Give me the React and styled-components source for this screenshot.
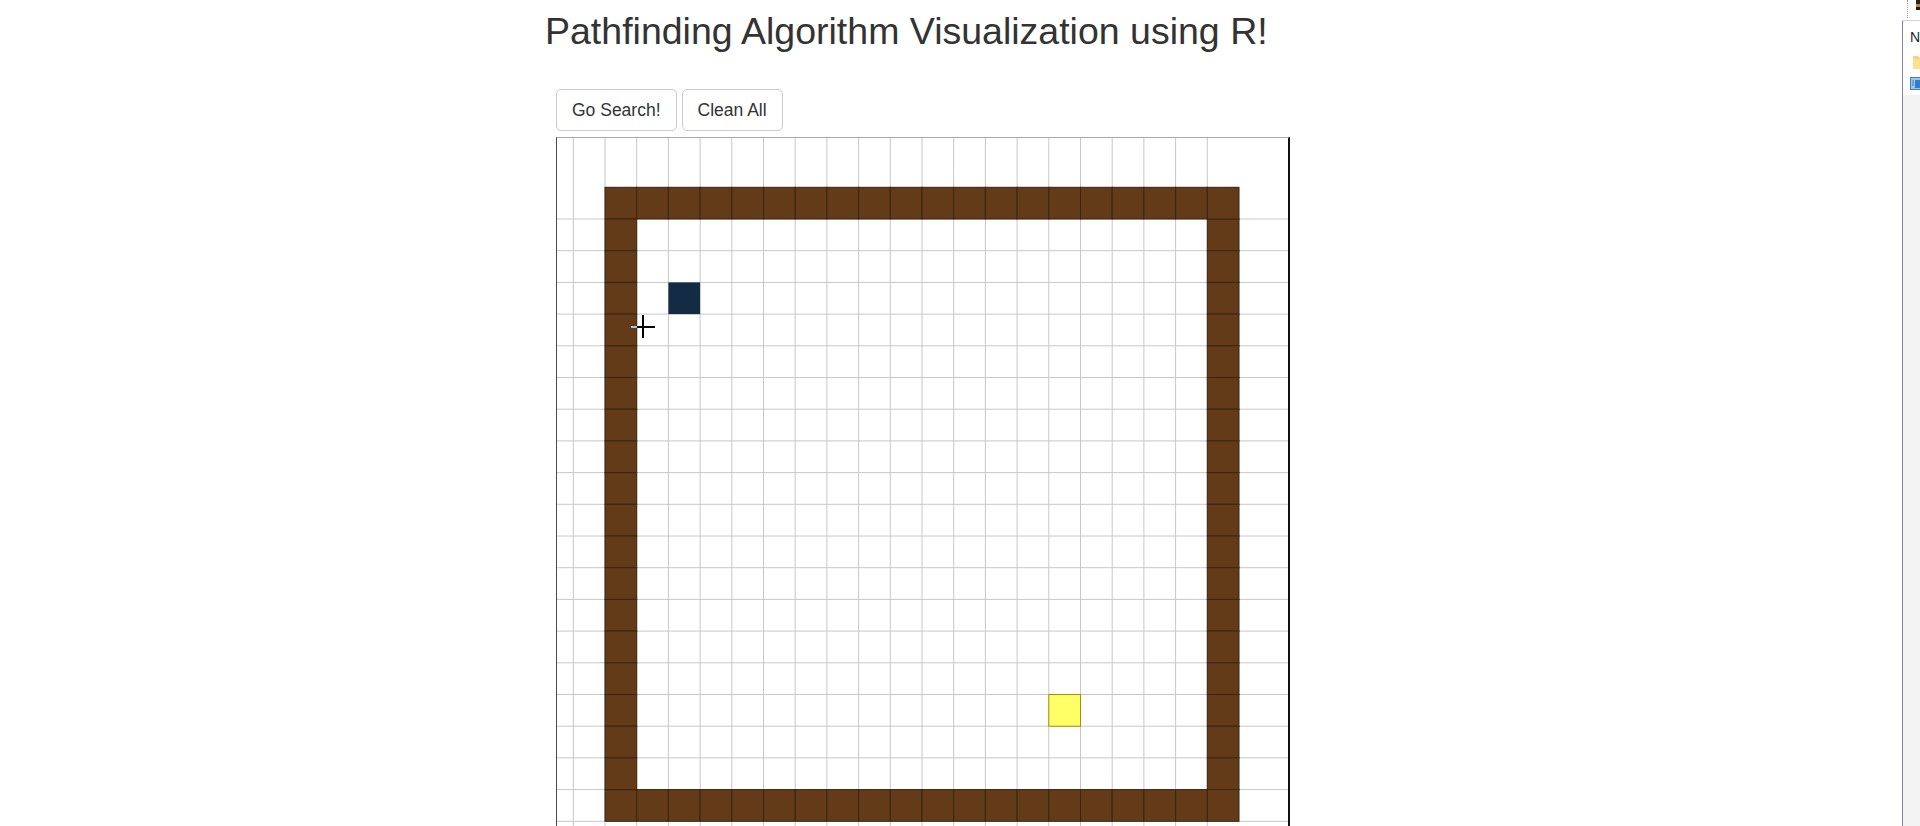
import React from 'react';
import styled, { createGlobalStyle } from 'styled-components';

// maze geometry inside the board (px)
const CELL = 31.7;
const MAZE_X = 48;
const MAZE_Y = 49.3;
const SIZE = 20;
const BOARD_W = 731;
const BOARD_H = 700;

const start = { col: 2, row: 3 };
const goal = { col: 14, row: 16 };

const walls = [];
for (let i = 0; i < SIZE; i++) {
  walls.push([i, 0], [i, SIZE - 1]);
  if (i > 0 && i < SIZE - 1) walls.push([0, i], [SIZE - 1, i]);
}

const GlobalStyle = createGlobalStyle`
  html, body {
    margin: 0;
    padding: 0;
    overflow: hidden;
    background: #fff;
  }
  body {
    font-family: "Liberation Sans", Arial, sans-serif;
    color: #333;
  }
`;

const Screen = styled.div`
  display: flex;
  width: 1920px;
  height: 826px;
  overflow: hidden;
`;

const Main = styled.main`
  flex: 1;
  padding-left: 545px;
`;

const Title = styled.h2`
  margin: 11px 0 0;
  font-size: 37.5px;
  font-weight: 400;
  line-height: 1.1;
  color: #333;
`;

const Toolbar = styled.div`
  display: flex;
  gap: 5px;
  margin: 37px 0 0 11px;
`;

const Button = styled.button`
  height: 42px;
  padding: 0 15px;
  border: 1px solid #ccc;
  border-radius: 5px;
  background: #fff;
  color: #333;
  font-family: "Liberation Sans", Arial, sans-serif;
  font-size: 17.5px;
  line-height: 25px;
`;

const Board = styled.div`
  position: relative;
  width: ${BOARD_W}px;
  height: ${BOARD_H}px;
  margin: 6px 0 0 11px;
  border-left: 1px solid #4a4a4a;
  border-top: 1px solid #a8a8a8;
  border-right: 2px solid #111;
`;

const Cursor = styled.svg`
  position: absolute;
  left: ${(p) => p.$x - 12}px;
  top: ${(p) => p.$y - 12}px;
  pointer-events: none;
`;

const SideWindow = styled.aside`
  width: 18px;
  display: flex;
  flex-direction: column;
  overflow: hidden;
`;

const SideTop = styled.div`
  position: relative;
  height: 20px;
  border-bottom: 1px solid #d2d2d2;
  &::before {
    content: '';
    position: absolute;
    left: 5px;
    top: 0;
    height: 18px;
    border-left: 1px dotted #9a9a9a;
  }
`;

const TopIcon = styled.div`
  position: absolute;
  left: 14px;
  top: 0;
  width: 6px;
  height: 10px;
  background: linear-gradient(#2a2014 0 4px, #b08a4a 4px 7px, #1a1a1a 7px);
`;

const SidePanel = styled.div`
  flex: 1;
  display: flex;
  flex-direction: column;
  gap: 7px;
  padding: 5px 0 0 7px;
  border-left: 1px solid #83839a;
  background: linear-gradient(#fff 0 74px, #f3f3f3 74px);
`;

const SideLetter = styled.div`
  height: 20px;
  font-family: "Liberation Sans", Arial, sans-serif;
  font-size: 14px;
  line-height: 22px;
  color: #1b2430;
  white-space: nowrap;
`;

const SideIcon = styled.svg`
  display: block;
  margin-left: ${(p) => p.$indent || 0}px;
`;

function Maze() {
  const vLines = [];
  for (let k = 0; k <= SIZE; k++) vLines.push(MAZE_X - CELL + k * CELL);
  const hLines = [];
  for (let k = 1; k <= SIZE + 1; k++) hLines.push(MAZE_Y + k * CELL);

  return (
    <svg width={BOARD_W} height={BOARD_H} style={{ display: 'block' }}>
      {vLines.map((x) => (
        <line key={'v' + x} x1={x} x2={x} y1={0} y2={BOARD_H} stroke="#c8c8c8" strokeWidth="1" />
      ))}
      {hLines.map((y) => (
        <line key={'h' + y} x1={0} x2={BOARD_W} y1={y} y2={y} stroke="#c8c8c8" strokeWidth="1" />
      ))}
      {walls.map(([c, r]) => (
        <rect
          key={c + '-' + r}
          x={MAZE_X + c * CELL}
          y={MAZE_Y + r * CELL}
          width={CELL}
          height={CELL}
          fill="#643b19"
          stroke="#3a2410"
          strokeWidth="1"
        />
      ))}
      <rect
        x={MAZE_X + start.col * CELL}
        y={MAZE_Y + start.row * CELL}
        width={CELL}
        height={CELL}
        fill="#132b43"
      />
      <rect
        x={MAZE_X + goal.col * CELL}
        y={MAZE_Y + goal.row * CELL}
        width={CELL}
        height={CELL}
        fill="#ffff66"
        stroke="#b8860b"
        strokeWidth="1"
      />
    </svg>
  );
}

export default function App() {
  return (
    <Screen>
      <GlobalStyle />
      <Main>
        <Title>Pathfinding Algorithm Visualization using R!</Title>
        <Toolbar>
          <Button>Go Search!</Button>
          <Button>Clean All</Button>
        </Toolbar>
        <Board>
          <Maze />
          <Cursor $x={86} $y={189} width="24" height="24" viewBox="0 0 24 24">
            <line x1="0" y1="12" x2="6" y2="12" stroke="#9cc8ee" strokeWidth="2" />
            <line x1="6" y1="12" x2="24" y2="12" stroke="#000" strokeWidth="2" />
            <line x1="12" y1="0" x2="12" y2="23" stroke="#000" strokeWidth="2" />
          </Cursor>
        </Board>
      </Main>
      <SideWindow>
        <SideTop>
          <TopIcon />
        </SideTop>
        <SidePanel>
          <SideLetter>N</SideLetter>
          <SideIcon $indent={2} width="14" height="17" viewBox="0 0 14 17">
            <path d="M1 3h5l2 2h6v11H1z" fill="#f6d57a" />
            <path d="M1 6h13v10H1z" fill="#fbe08f" />
          </SideIcon>
          <SideIcon width="14" height="13" viewBox="0 0 14 13">
            <rect x="0.5" y="0.5" width="13" height="12" fill="#9cc3e8" stroke="#4a7fb8" />
            <rect x="5" y="3" width="9" height="8" fill="#2f7fd0" />
            <path d="M2 4h2M2 6h2M2 8h2" stroke="#4a7fb8" />
          </SideIcon>
        </SidePanel>
      </SideWindow>
    </Screen>
  );
}
